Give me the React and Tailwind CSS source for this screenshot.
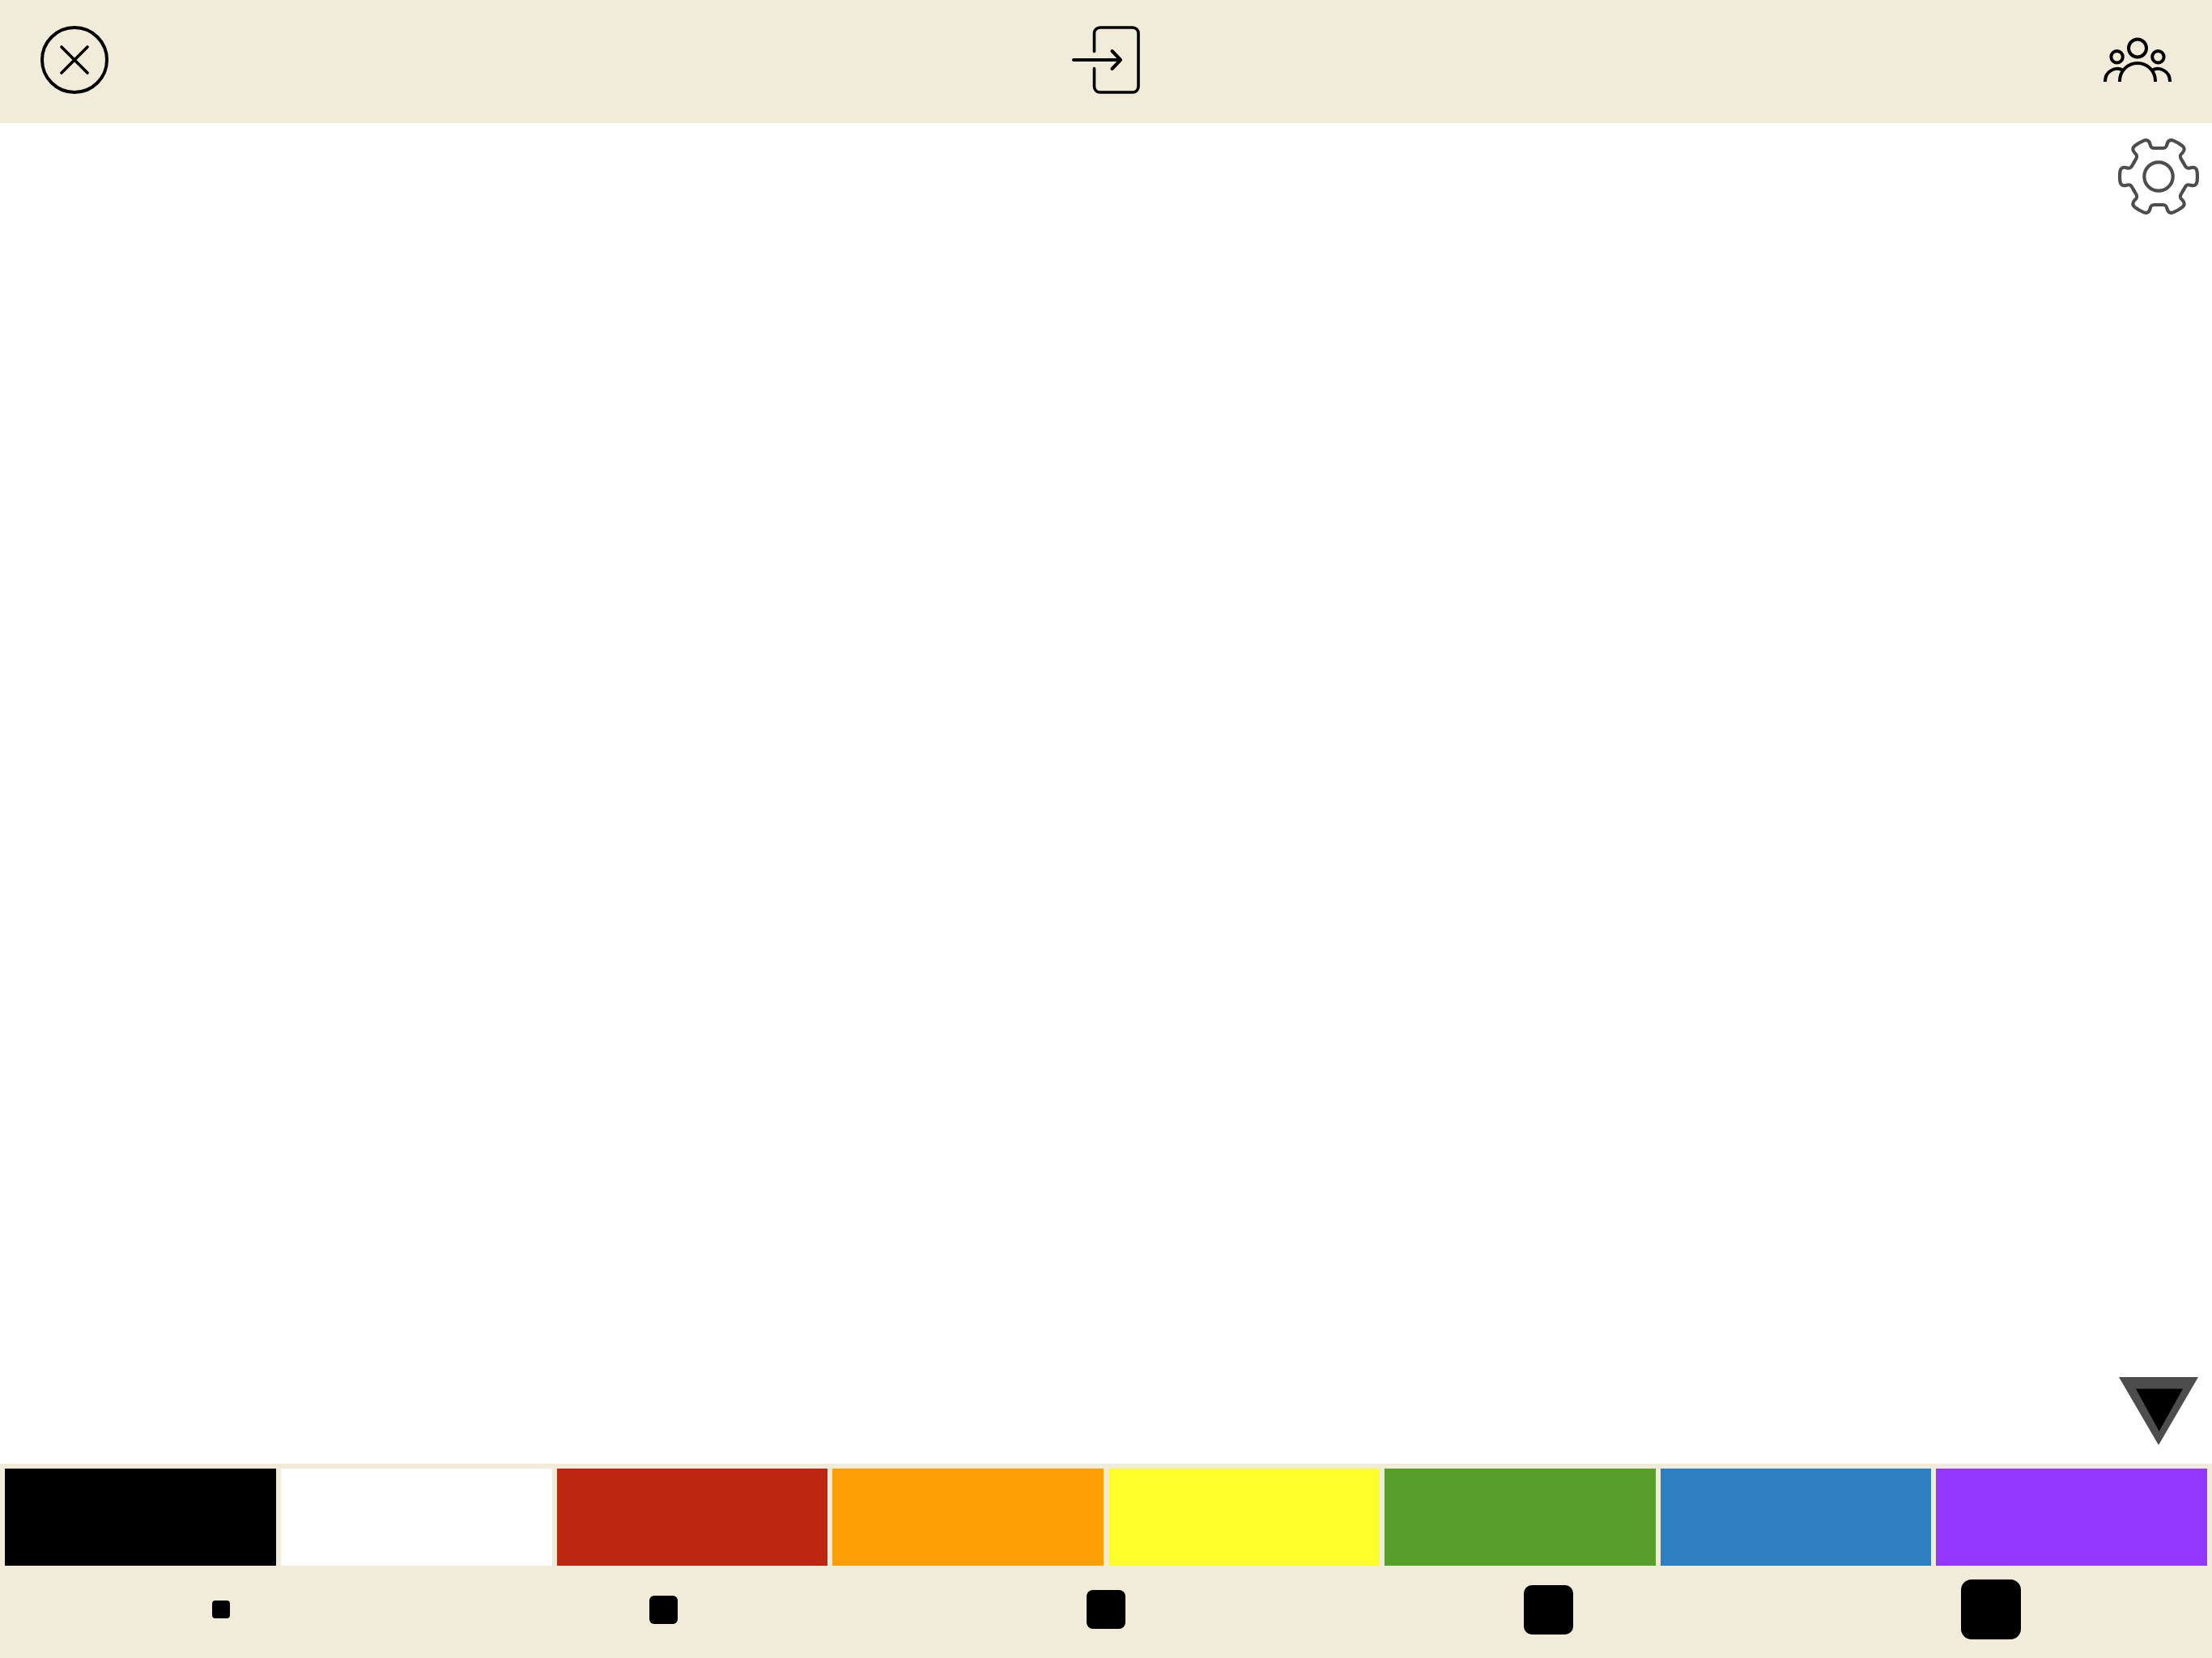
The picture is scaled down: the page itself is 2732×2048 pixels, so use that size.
const swatches = [
  { name: "Black", tone: "bg-black" },
  { name: "White", tone: "bg-white" },
  { name: "Red", tone: "bg-[#bd2712]" },
  { name: "Orange", tone: "bg-[#ff9f05]" },
  { name: "Yellow", tone: "bg-[#fdff2a]" },
  { name: "Green", tone: "bg-[#579f2a]" },
  { name: "Blue", tone: "bg-[#2d7fc1]" },
  { name: "Purple", tone: "bg-[#9337ff]" },
];

const brushes = [
  { name: "Extra small brush", shape: "size-[22px] rounded-[4px]" },
  { name: "Small brush", shape: "size-[35px] rounded-[6px]" },
  { name: "Medium brush", shape: "size-[48px] rounded-[8px]" },
  { name: "Large brush", shape: "size-[61px] rounded-[10px]" },
  { name: "Extra large brush", shape: "size-[74px] rounded-[13px]" },
];

function CloseIcon() {
  return (
    <svg viewBox="0 0 84 84" className="size-[84px]" fill="none" stroke="black" strokeWidth="4" aria-hidden="true">
      <circle cx="42" cy="42" r="40" />
      <path d="M26 26 58 58M58 26 26 58" strokeWidth="3.6" strokeLinecap="round" />
    </svg>
  );
}

function EnterIcon() {
  return (
    <svg viewBox="0 0 84 84" className="size-[84px]" fill="none" stroke="black" strokeWidth="4" strokeLinecap="round" strokeLinejoin="round" aria-hidden="true">
      <path d="M27.5 31.5V9a7 7 0 0 1 7-7H75a7 7 0 0 1 7 7v66a7 7 0 0 1-7 7H34.5a7 7 0 0 1-7-7V52.5" strokeWidth="3.6" />
      <path d="M2 42H60M49.5 31 60 42 49.500 53" />
    </svg>
  );
}

function PeopleIcon() {
  return (
    <svg viewBox="0 0 84 84" className="size-[84px]" fill="none" stroke="black" strokeWidth="4" aria-hidden="true">
      <circle cx="42" cy="27.5" r="11" />
      <circle cx="16.6" cy="38.3" r="7.2" />
      <circle cx="67.4" cy="38.3" r="7.2" />
      <path d="M20 69v-1a22 22 0 0 1 44 0v1" />
      <path d="M2 69v-1a15 15 0 0 1 22-13.3" />
      <path d="M82 69v-1a15 15 0 0 0-22-13.3" />
    </svg>
  );
}

function GearIcon() {
  const tooth =
    "M80.3 32.500 83 37.200C85 40.400 87 40 89.500 39.200C94.500 37.700 97 40 97.500 43.500Q98.400 50 97.500 56.500C97 60 94.500 62.300 89.500 60.800C87 60 85 59.600 83 62.800L80.300 67.500";
  return (
    <svg viewBox="0 0 100 100" className="size-[100px]" fill="none" stroke="#4d4d4d" strokeWidth="4.2" strokeLinecap="round" aria-hidden="true">
      <circle cx="50" cy="50" r="17.7" />
      {[0, 60, 120, 180, 240, 300].map((angle) => (
        <path key={angle} d={tooth} transform={`rotate(${angle} 50 50)`} />
      ))}
    </svg>
  );
}

function TriangleIcon() {
  return (
    <svg viewBox="0 0 100 84" className="h-[84px] w-[100px]" aria-hidden="true">
      <path d="M1 0H99L50 84Z" fill="#4d4d4d" />
      <path d="M22 14.5H80L50.7 67Z" fill="black" />
    </svg>
  );
}

export default function App() {
  return (
    <div className="flex min-h-screen flex-col bg-[#f1ebd9]">
      <header className="flex items-center justify-between px-[50px] pt-8 pb-9">
        <button type="button" aria-label="Close"><CloseIcon /></button>
        <button type="button" aria-label="Enter room"><EnterIcon /></button>
        <button type="button" aria-label="Players"><PeopleIcon /></button>
      </header>

      <main className="relative flex-1 bg-white">
        <button type="button" aria-label="Settings" className="absolute top-4 right-4">
          <GearIcon />
        </button>
        <button type="button" aria-label="Hide palette" className="absolute right-4 bottom-[23px]">
          <TriangleIcon />
        </button>
      </main>

      <footer className="pb-1.5">
        <div className="grid grid-cols-8 gap-1.5 px-1.5 pt-1.5">
          {swatches.map(({ name, tone }) => (
            <button key={name} type="button" aria-label={name} className={`h-[120px] ${tone}`} />
          ))}
        </div>
        <div className="grid h-[108px] grid-cols-5">
          {brushes.map(({ name, shape }) => (
            <button key={name} type="button" aria-label={name} className="flex items-center justify-center">
              <span className={`bg-black ${shape}`} />
            </button>
          ))}
        </div>
      </footer>
    </div>
  );
}
